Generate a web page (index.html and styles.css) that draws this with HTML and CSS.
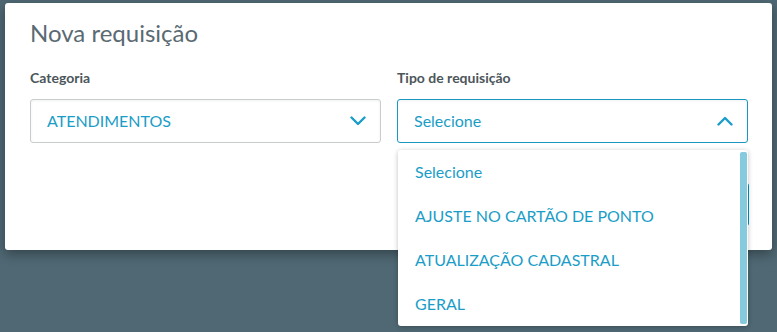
FILE: index.html
```html
<!DOCTYPE html>
<html lang="pt-BR">
<head>
    <meta charset="UTF-8">
    <title>Nova requisição</title>
    <link rel="stylesheet" href="styles.css">
</head>
<body>
    <div class="modal">
        <h1 class="modal-title">Nova requisição</h1>
        <div class="fields">
            <div class="field">
                <label class="field-label">Categoria</label>
                <div class="select">
                    <span>ATENDIMENTOS</span>
                    <svg class="chevron" width="16" height="10" viewBox="0 0 16 10"><path d="M1.5 1.5 L8 8 L14.5 1.5" fill="none" stroke="#1a9dc7" stroke-width="2.4" stroke-linecap="round" stroke-linejoin="round"/></svg>
                </div>
            </div>
            <div class="field field-open">
                <label class="field-label">Tipo de requisição</label>
                <div class="select select-open">
                    <span>Selecione</span>
                    <svg class="chevron" width="16" height="10" viewBox="0 0 16 10"><path d="M1.5 8.5 L8 2 L14.5 8.5" fill="none" stroke="#1a9dc7" stroke-width="2.4" stroke-linecap="round" stroke-linejoin="round"/></svg>
                </div>
                <ul class="options">
                    <li>Selecione</li>
                    <li>AJUSTE NO CARTÃO DE PONTO</li>
                    <li>ATUALIZAÇÃO CADASTRAL</li>
                    <li>GERAL</li>
                </ul>
            </div>
        </div>
        <div class="modal-footer">
            <button class="btn-primary">Salvar</button>
        </div>
    </div>
</body>
</html>
```
FILE: styles.css
```css
*{
    box-sizing: border-box;
}
html,body,div,ul,li,h1,label{
    margin: 0;
    padding: 0;
}
html{
    height: 100%;
    background-color: #4f6873;
}
body{
    min-height: 100%;
    background-color: #4f6873;
    font: 15px/1.2 Lato, "Open Sans", sans-serif;
    padding-top: 3px;
}
ul{
    list-style-type: none;
}
.modal{
    width: 767px;
    height: 247px;
    margin-left: 5px;
    padding: 15px 24px 0 25px;
    background-color: #fff;
    border-radius: 3px;
    box-shadow: 0 4px 12px rgba(0,0,0,.35);
}
.modal-title{
    font: 400 24px/30px Lato, sans-serif;
    color: #5a6a72;
    margin-bottom: 21px;
}
.fields{
    display: flex;
    gap: 16px;
}
.field{
    flex: 1;
    position: relative;
}
.field-label{
    display: block;
    font: 700 14px/18px Lato, sans-serif;
    color: #4c565b;
    margin-bottom: 12px;
}
.select{
    height: 44px;
    border: 1px solid #c9cccd;
    border-radius: 3px;
    box-shadow: inset 0 1px 3px rgba(0,0,0,.06);
    display: flex;
    align-items: center;
    justify-content: space-between;
    padding: 0 14px 0 16px;
    color: #1a9dc7;
    font-size: 16px;
}
.select-open{
    border-color: #1797c2;
}
.options{
    position: absolute;
    top: 81px;
    left: 1px;
    width: 350px;
    background-color: #fff;
    border-radius: 3px;
    box-shadow: 0 1px 5px rgba(0,0,0,.25);
    z-index: 2;
}
.options::after{
    content: "";
    position: absolute;
    top: 2px;
    bottom: 2px;
    right: 1px;
    width: 7px;
    border-radius: 2px;
    background-color: #86cadd;
}
.options li{
    height: 44px;
    line-height: 44px;
    padding-left: 17px;
    color: #1a9dc7;
    font-size: 16px;
}
.modal-footer{
    display: flex;
    justify-content: flex-end;
    margin-top: 40px;
}
.btn-primary{
    height: 43px;
    padding: 0 30px;
    border: 0;
    border-radius: 3px;
    background-color: #0c8fb8;
    color: #fff;
    font: 700 14px Lato, sans-serif;
    margin-right: -1px;
}
```
